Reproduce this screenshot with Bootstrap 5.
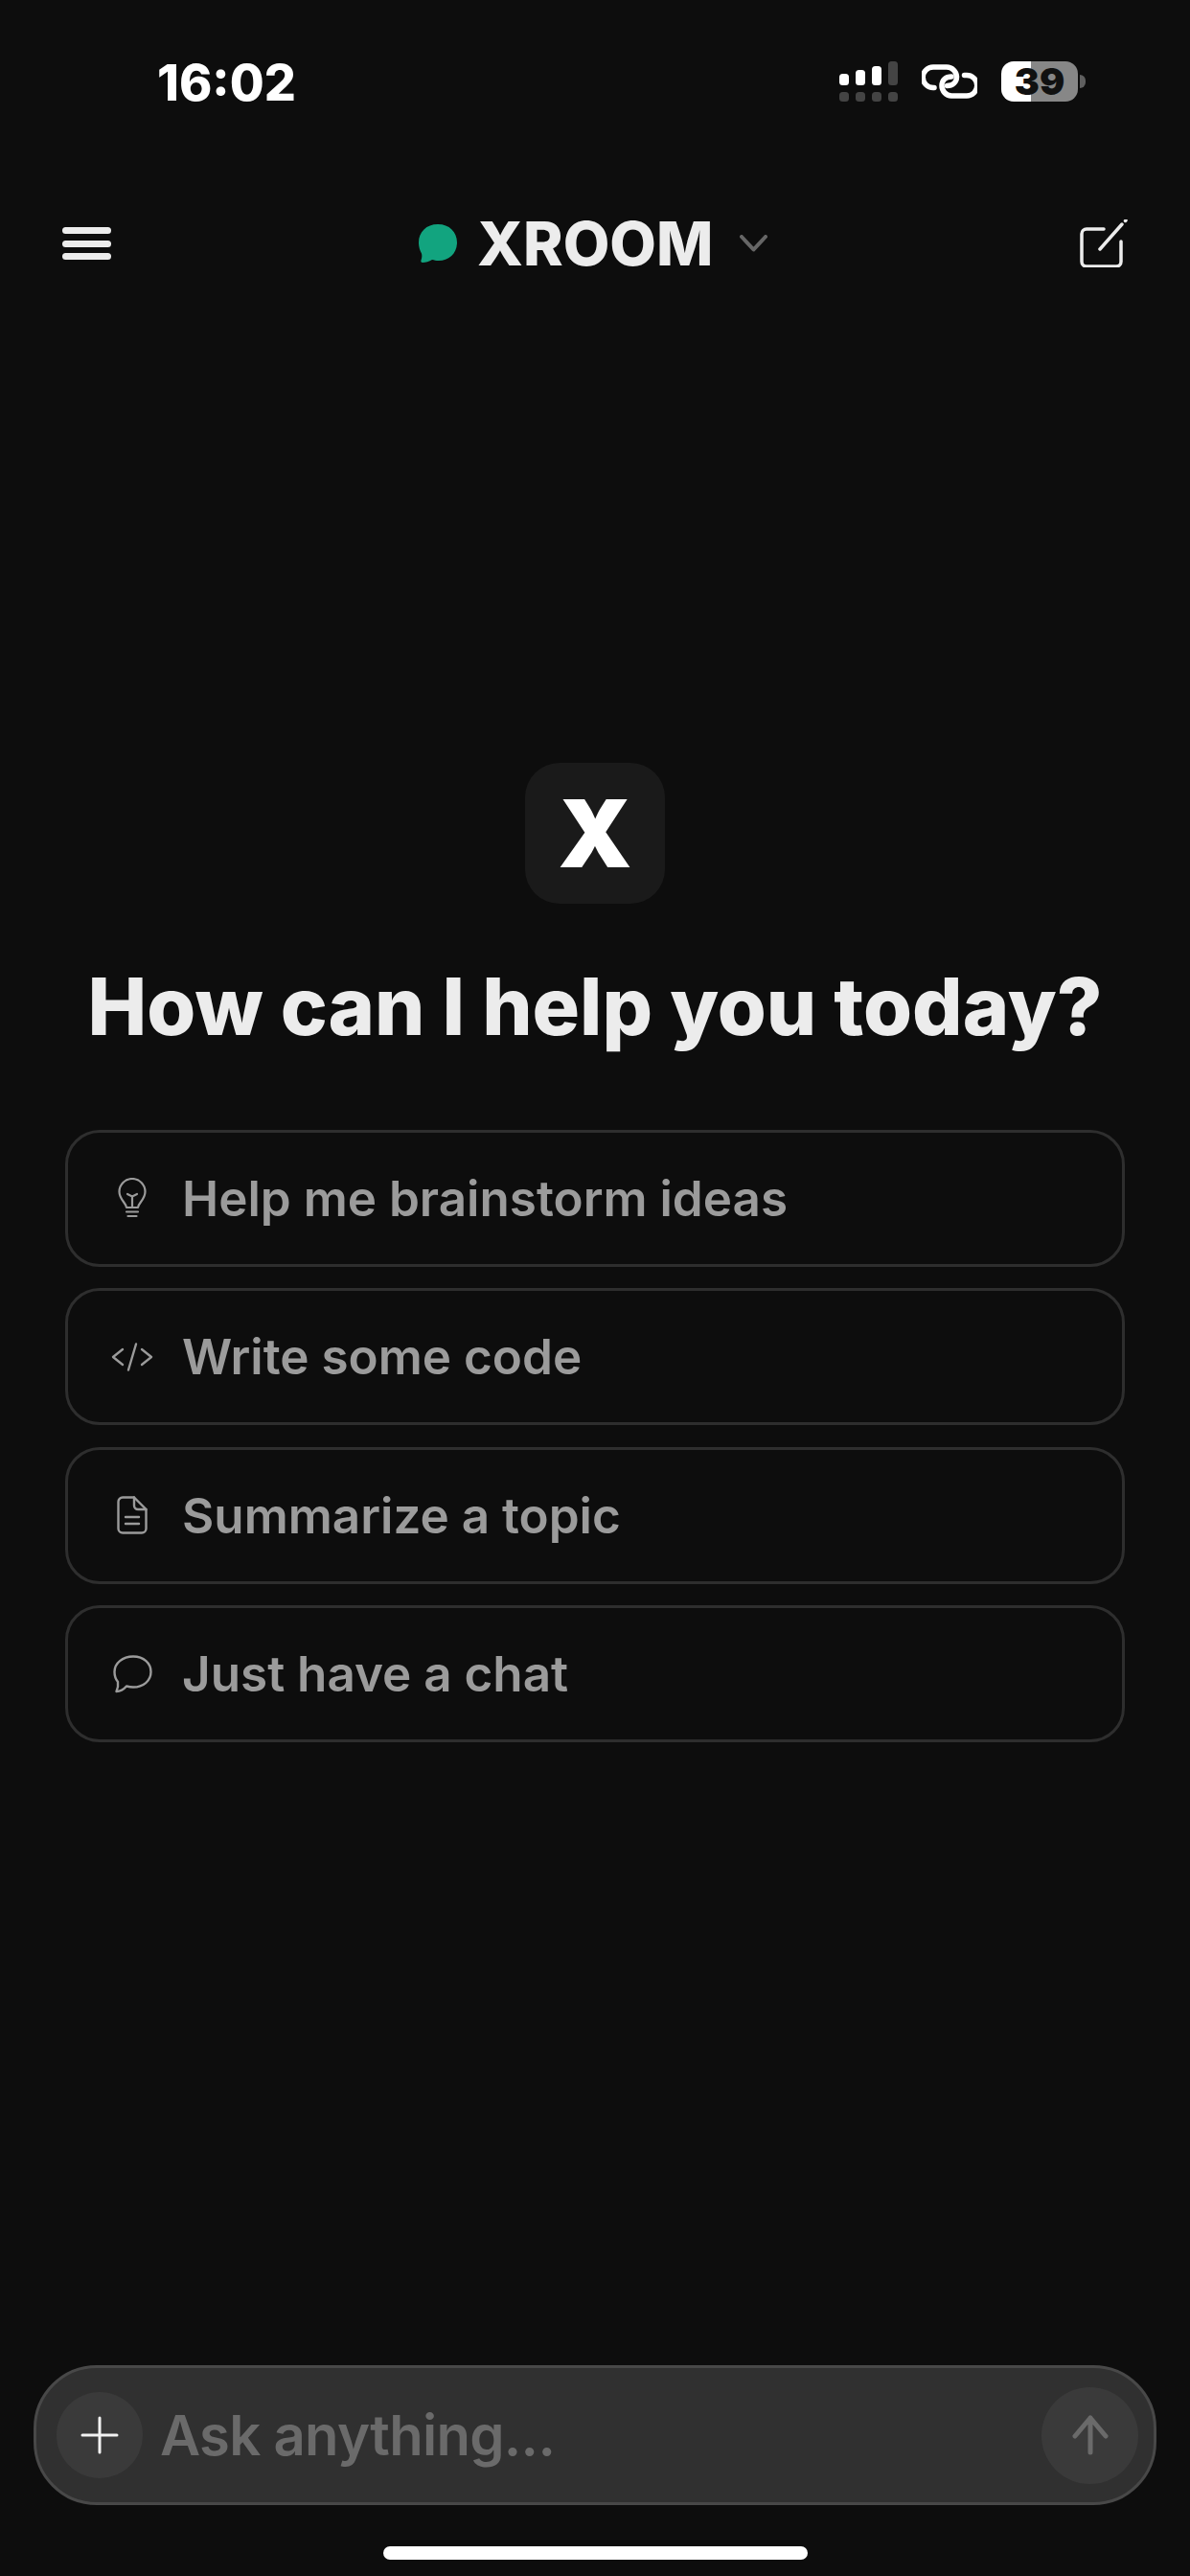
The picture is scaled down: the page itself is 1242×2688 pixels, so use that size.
<!DOCTYPE html>
<html lang="en">
<head>
    <meta charset="UTF-8">
    <meta name="viewport" content="width=device-width, initial-scale=1.0">
    <link href="https://cdn.jsdelivr.net/npm/bootstrap@5.3.3/dist/css/bootstrap.min.css" rel="stylesheet">
    <script src="https://cdn.jsdelivr.net/npm/bootstrap@5.3.3/dist/js/bootstrap.bundle.min.js"></script>
    <title>XROOM</title>
    <style>
        body{
            background-color: #0d0d0d;
            font-family: Inter, "Liberation Sans", sans-serif;
        }
        svg{
            display: block;
            flex-shrink: 0;
        }
        .screen{
            height: 2688px;
            overflow: hidden;
        }
        .status-row{
            height: 42px;
            margin-top: 64px;
            padding-left: 164px;
            padding-right: 109px;
        }
        .status-time{
            color: #fff;
            font-size: 52px;
            font-weight: 800;
            line-height: 42px;
            padding-top: 3px;
        }
        .status-icons{
            gap: 25px;
        }
        .battery-box{
            width: 80px;
            height: 42px;
            border-radius: 13px;
            background: linear-gradient(90deg, #fff 31px, #878787 31px);
            color: #111;
            font-size: 39px;
            font-weight: 900;
            line-height: 42px;
        }
        .battery-nub{
            width: 6px;
            height: 14px;
            margin-left: 2px;
            border-radius: 0 6px 6px 0;
            background-color: #5f5f5f;
        }
        .top-bar{
            height: 60px;
            margin-top: 118px;
            padding-left: 65px;
            padding-right: 65px;
        }
        .brand-name{
            color: #ececec;
            font-size: 63px;
            font-weight: 800;
            line-height: 60px;
            margin-left: 21px;
            margin-right: 27px;
        }
        .brand-wrap{
            margin-left: 321px;
        }
        .compose-wrap{
            margin-left: auto;
        }
        .logo-tile{
            width: 146px;
            height: 147px;
            margin-top: 512px;
            border-radius: 36px;
            background-color: #1a1a1a;
            color: #fff;
            font-size: 98px;
            font-weight: 900;
            line-height: 1;
        }
        .hello-title{
            color: #ececec;
            font-size: 82.5px;
            font-weight: 800;
            line-height: 100px;
            margin-top: 57px;
            margin-bottom: 0;
        }
        .suggest-list{
            margin-top: 79px;
            padding-left: 68px;
            padding-right: 68px;
            gap: 22.4px;
        }
        .suggest-item{
            height: 143px;
            border: 3px solid #2e2e2e;
            border-radius: 36px;
            color: #9b9b9b;
            font-size: 51.2px;
            font-weight: 600;
            padding: 0;
            text-align: left;
        }
        .suggest-icon{
            width: 58px;
            margin-left: 38px;
            margin-right: 23px;
        }
        .composer{
            height: 146px;
            margin-top: auto;
            margin-left: 35px;
            margin-right: 35px;
            border: 3px solid #484848;
            border-radius: 66px;
            background-color: #303030;
            padding-left: 21px;
            padding-right: 16px;
        }
        .plus-btn{
            width: 90px;
            height: 90px;
            border-radius: 50%;
            background-color: #3a3a3a;
        }
        .ask-text{
            color: #6a6a6a;
            font-size: 58px;
            font-weight: 600;
            letter-spacing: -0.7px;
            line-height: 1;
            margin-left: 18px;
        }
        .send-btn{
            width: 101px;
            height: 101px;
            border-radius: 50%;
            background-color: #3a3a3a;
            margin-left: auto;
        }
        .home-bar{
            width: 443px;
            height: 14px;
            margin-top: 43px;
            margin-bottom: 17px;
            border-radius: 7px;
            background-color: #fff;
        }
    </style>
</head>
<body>
    <div class="screen d-flex flex-column">
        <div class="status-row d-flex align-items-center justify-content-between">
            <div class="status-time">16:02</div>
            <div class="status-icons d-flex align-items-center">
                <svg width="61" height="42" viewBox="0 0 61 42">
                    <rect x="0" y="13" width="10" height="12" rx="3.5" fill="#fff"/>
                    <rect x="17" y="9" width="10" height="16" rx="3.5" fill="#fff"/>
                    <rect x="34" y="5" width="10" height="20" rx="3.5" fill="#fff"/>
                    <rect x="51" y="0" width="10" height="25" rx="3.5" fill="#444"/>
                    <rect x="0" y="32" width="10" height="10" rx="3.5" fill="#444"/>
                    <rect x="17" y="32" width="10" height="10" rx="3.5" fill="#444"/>
                    <rect x="34" y="32" width="10" height="10" rx="3.5" fill="#444"/>
                    <rect x="51" y="32" width="10" height="10" rx="3.5" fill="#444"/>
                </svg>
                <svg width="58" height="36" viewBox="0 0 58 36" fill="none" stroke="#fff" stroke-width="5.500" stroke-linecap="round">
                    <path d="M13 24.500 H12 A10.500 10.500 0 0 1 12 3 H26 A10.500 10.500 0 0 1 36.500 13 C36.500 19 32 22.500 26.500 22.500"/>
                    <path d="M44.500 11.500 H47 A10.500 10.500 0 0 1 47 33 H31 A10.500 10.500 0 0 1 21 22.500 C21 16.500 25 13 31 13"/>
                </svg>
                <div class="d-flex align-items-center">
                    <div class="battery-box text-center">39</div>
                    <div class="battery-nub"></div>
                </div>
            </div>
        </div>

        <div class="top-bar d-flex align-items-center">
            <svg width="51" height="34" viewBox="0 0 51 34" fill="#ececec">
                <rect x="0" y="0" width="51" height="7" rx="3.500"/>
                <rect x="0" y="14" width="51" height="7" rx="3.500"/>
                <rect x="0" y="27" width="51" height="7" rx="3.500"/>
            </svg>
            <div class="brand-wrap d-flex align-items-center">
                <svg width="40" height="40" viewBox="0 0 40 40">
                    <path d="M20 0 C32 0 40 8 40 19 C40 31 31 38 21 38 C18 38 16 37.500 14 37 C11 39 7 40 4 40 C2.500 40 2 39 2.500 37.500 C3.500 35 3.500 32.500 3 30.500 C1 27 0 23 0 19 C0 8 8 0 20 0 Z" fill="#12a47f"/>
                </svg>
                <div class="brand-name">XROOM</div>
                <svg width="29" height="18" viewBox="0 0 29 18" fill="none" stroke="#666" stroke-width="4" stroke-linecap="round" stroke-linejoin="round">
                    <path d="M2 2 L14.500 15.500 L27 2"/>
                </svg>
            </div>
            <div class="compose-wrap">
                <svg width="50" height="50" viewBox="0 0 50 50" fill="none" stroke="#ececec" stroke-width="3.500" stroke-linecap="round">
                    <path d="M25 10 H7 A5 5 0 0 0 2 15 V44 A5 5 0 0 0 7 49 H38 A5 5 0 0 0 43 44 V23"/>
                    <path d="M21 31 L44 5"/>
                    <path d="M47.500 1.500 L48 1"/>
                </svg>
            </div>
        </div>

        <div class="d-flex justify-content-center">
            <div class="logo-tile d-flex align-items-center justify-content-center">X</div>
        </div>
        <h1 class="hello-title text-center">How can I help you today?</h1>

        <div class="suggest-list d-flex flex-column">
            <div class="suggest-item d-flex align-items-center">
                <div class="suggest-icon d-flex justify-content-center">
                    <svg width="30" height="43" viewBox="0 0 30 43" fill="none" stroke="#9b9b9b" stroke-width="2.200" stroke-linecap="round" stroke-linejoin="round">
                        <path d="M9 31 C8.500 26 1.500 22.500 1.500 14.500 A13.500 13.500 0 0 1 28.500 14.500 C28.500 22.500 21.500 26 21 31 Z"/>
                        <path d="M10 17 L15 19.500 L20 17 M15 19.500 V31"/>
                        <path d="M9 35.500 H21 M10.500 40 H19.500"/>
                    </svg>
                </div>
                <span>Help me brainstorm ideas</span>
            </div>
            <div class="suggest-item d-flex align-items-center">
                <div class="suggest-icon d-flex justify-content-center">
                    <svg width="44" height="30" viewBox="0 0 44 30" fill="none" stroke="#9b9b9b" stroke-width="2.400" stroke-linecap="round" stroke-linejoin="round">
                        <path d="M12 7 L2 15 L12 23"/>
                        <path d="M26 1.500 L18 28.500"/>
                        <path d="M32 7 L42 15 L32 23"/>
                    </svg>
                </div>
                <span>Write some code</span>
            </div>
            <div class="suggest-item d-flex align-items-center">
                <div class="suggest-icon d-flex justify-content-center">
                    <svg width="32" height="40" viewBox="0 0 32 40" fill="none" stroke="#9b9b9b" stroke-width="2.400" stroke-linecap="round" stroke-linejoin="round">
                        <path d="M18 1.500 H6 A4.500 4.500 0 0 0 1.500 6 V34 A4.500 4.500 0 0 0 6 38.500 H26 A4.500 4.500 0 0 0 30.500 34 V14 Z"/>
                        <path d="M18 1.500 V10 A4 4 0 0 0 22 14 H30.500"/>
                        <path d="M9 22 H23 M9 29 H23"/>
                    </svg>
                </div>
                <span>Summarize a topic</span>
            </div>
            <div class="suggest-item d-flex align-items-center">
                <div class="suggest-icon d-flex justify-content-center">
                    <svg width="41" height="40" viewBox="0 0 41 40" fill="none" stroke="#9b9b9b" stroke-width="2.400" stroke-linecap="round" stroke-linejoin="round">
                        <path d="M21 1.500 C32 1.500 39.500 8.500 39.500 17.500 C39.500 27 31.500 33.500 21 33.500 C18 33.500 16 33 14 32.500 C11 36 7 38 3.500 38 C5 34.500 5.500 31 5 28 C2.500 25 1.500 21.500 1.500 17.500 C1.500 8.500 10 1.500 21 1.500 Z"/>
                    </svg>
                </div>
                <span>Just have a chat</span>
            </div>
        </div>

        <div class="composer d-flex align-items-center">
            <div class="plus-btn d-flex align-items-center justify-content-center">
                <svg width="40" height="40" viewBox="0 0 40 40" fill="none" stroke="#f2f2f2" stroke-width="3" stroke-linecap="round">
                    <path d="M20 2 V38 M2 20 H38"/>
                </svg>
            </div>
            <span class="ask-text">Ask anything...</span>
            <div class="send-btn d-flex align-items-center justify-content-center">
                <svg width="38" height="42" viewBox="0 0 38 42" fill="none" stroke="#6a6a6a" stroke-width="5" stroke-linecap="round" stroke-linejoin="round">
                    <path d="M19 39 V3 M3 22 L19 3 L35 22"/>
                </svg>
            </div>
        </div>
        <div class="d-flex justify-content-center">
            <div class="home-bar"></div>
        </div>
    </div>
</body>
</html>
